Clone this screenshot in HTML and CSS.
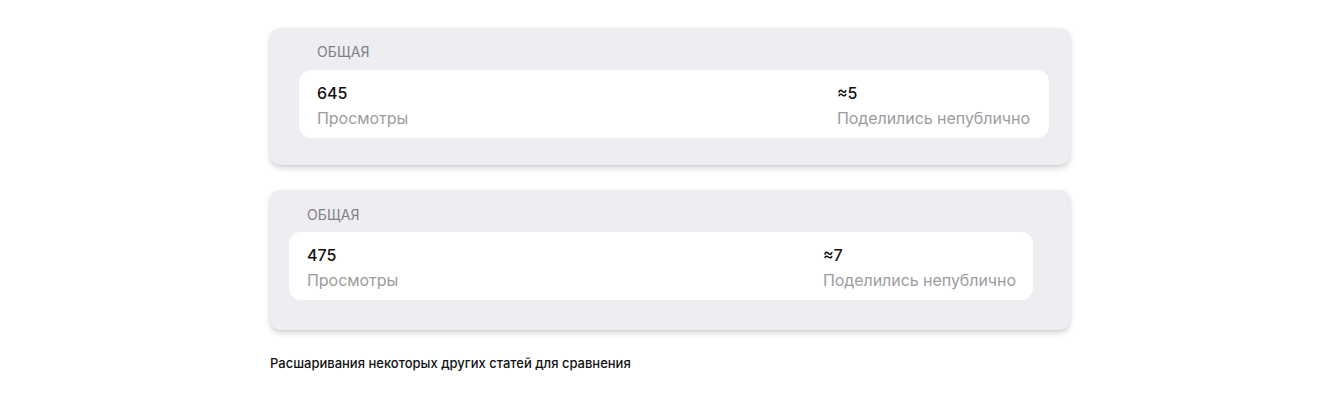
FILE: index.html
```html
<!DOCTYPE html>
<html lang="ru">
<head>
<meta charset="utf-8">
<link rel="stylesheet" href="styles.css">
</head>
<body>
<main class="page">
  <section class="card card--first">
    <div class="card-title">Общая</div>
    <div class="stats">
      <div class="stat">
        <div class="stat-value">645</div>
        <div class="stat-label">Просмотры</div>
      </div>
      <div class="stat">
        <div class="stat-value">≈5</div>
        <div class="stat-label">Поделились непублично</div>
      </div>
    </div>
  </section>
  <section class="card card--second">
    <div class="card-title">Общая</div>
    <div class="stats">
      <div class="stat">
        <div class="stat-value">475</div>
        <div class="stat-label">Просмотры</div>
      </div>
      <div class="stat">
        <div class="stat-value">≈7</div>
        <div class="stat-label">Поделились непублично</div>
      </div>
    </div>
  </section>
  <p class="caption">Расшаривания некоторых других статей для сравнения</p>
</main>
</body>
</html>
```

FILE: styles.css
```css
* { box-sizing: border-box; }
html, body { margin: 0; background: #ffffff; }
body {
  font-family: Inter, "Noto Sans", "DejaVu Sans", sans-serif;
  color: #111;
}
.page {
  width: 800px;
  margin: 0 auto;
  padding-top: 28px;
}
.card {
  background: #eeedf2;
  border-radius: 10px;
  box-shadow: 0 3px 6px rgba(0, 0, 0, 0.16), 0 1px 2px rgba(0, 0, 0, 0.06);
}
.card--first {
  padding: 16px 21px 27px 29px;
}
.card--second {
  margin-top: 25px;
  padding: 17px 37px 30px 19px;
}
.card-title {
  font-size: 14px;
  line-height: 16px;
  text-transform: uppercase;
  color: #808085;
  letter-spacing: 0.1px;
  padding-left: 18px;
  margin-bottom: 10px;
}
.card--second .card-title { margin-bottom: 9px; }
.stats {
  background: #ffffff;
  border-radius: 12px;
  height: 68px;
  padding: 11px 17px 0 18px;
  display: flex;
  justify-content: space-between;
}
.card--first .stats { padding-right: 19px; }
.stat-value {
  font-size: 16px;
  line-height: 24px;
  font-weight: 500;
  color: #111;
}
.stat-label {
  margin-top: 1px;
  font-size: 16px;
  line-height: 24px;
  color: #9c9c9f;
  letter-spacing: -0.05px;
}
.caption {
  margin: 24px 0 0;
  font-size: 13px;
  line-height: 18px;
  font-weight: 500;
  color: #111;
}
```
